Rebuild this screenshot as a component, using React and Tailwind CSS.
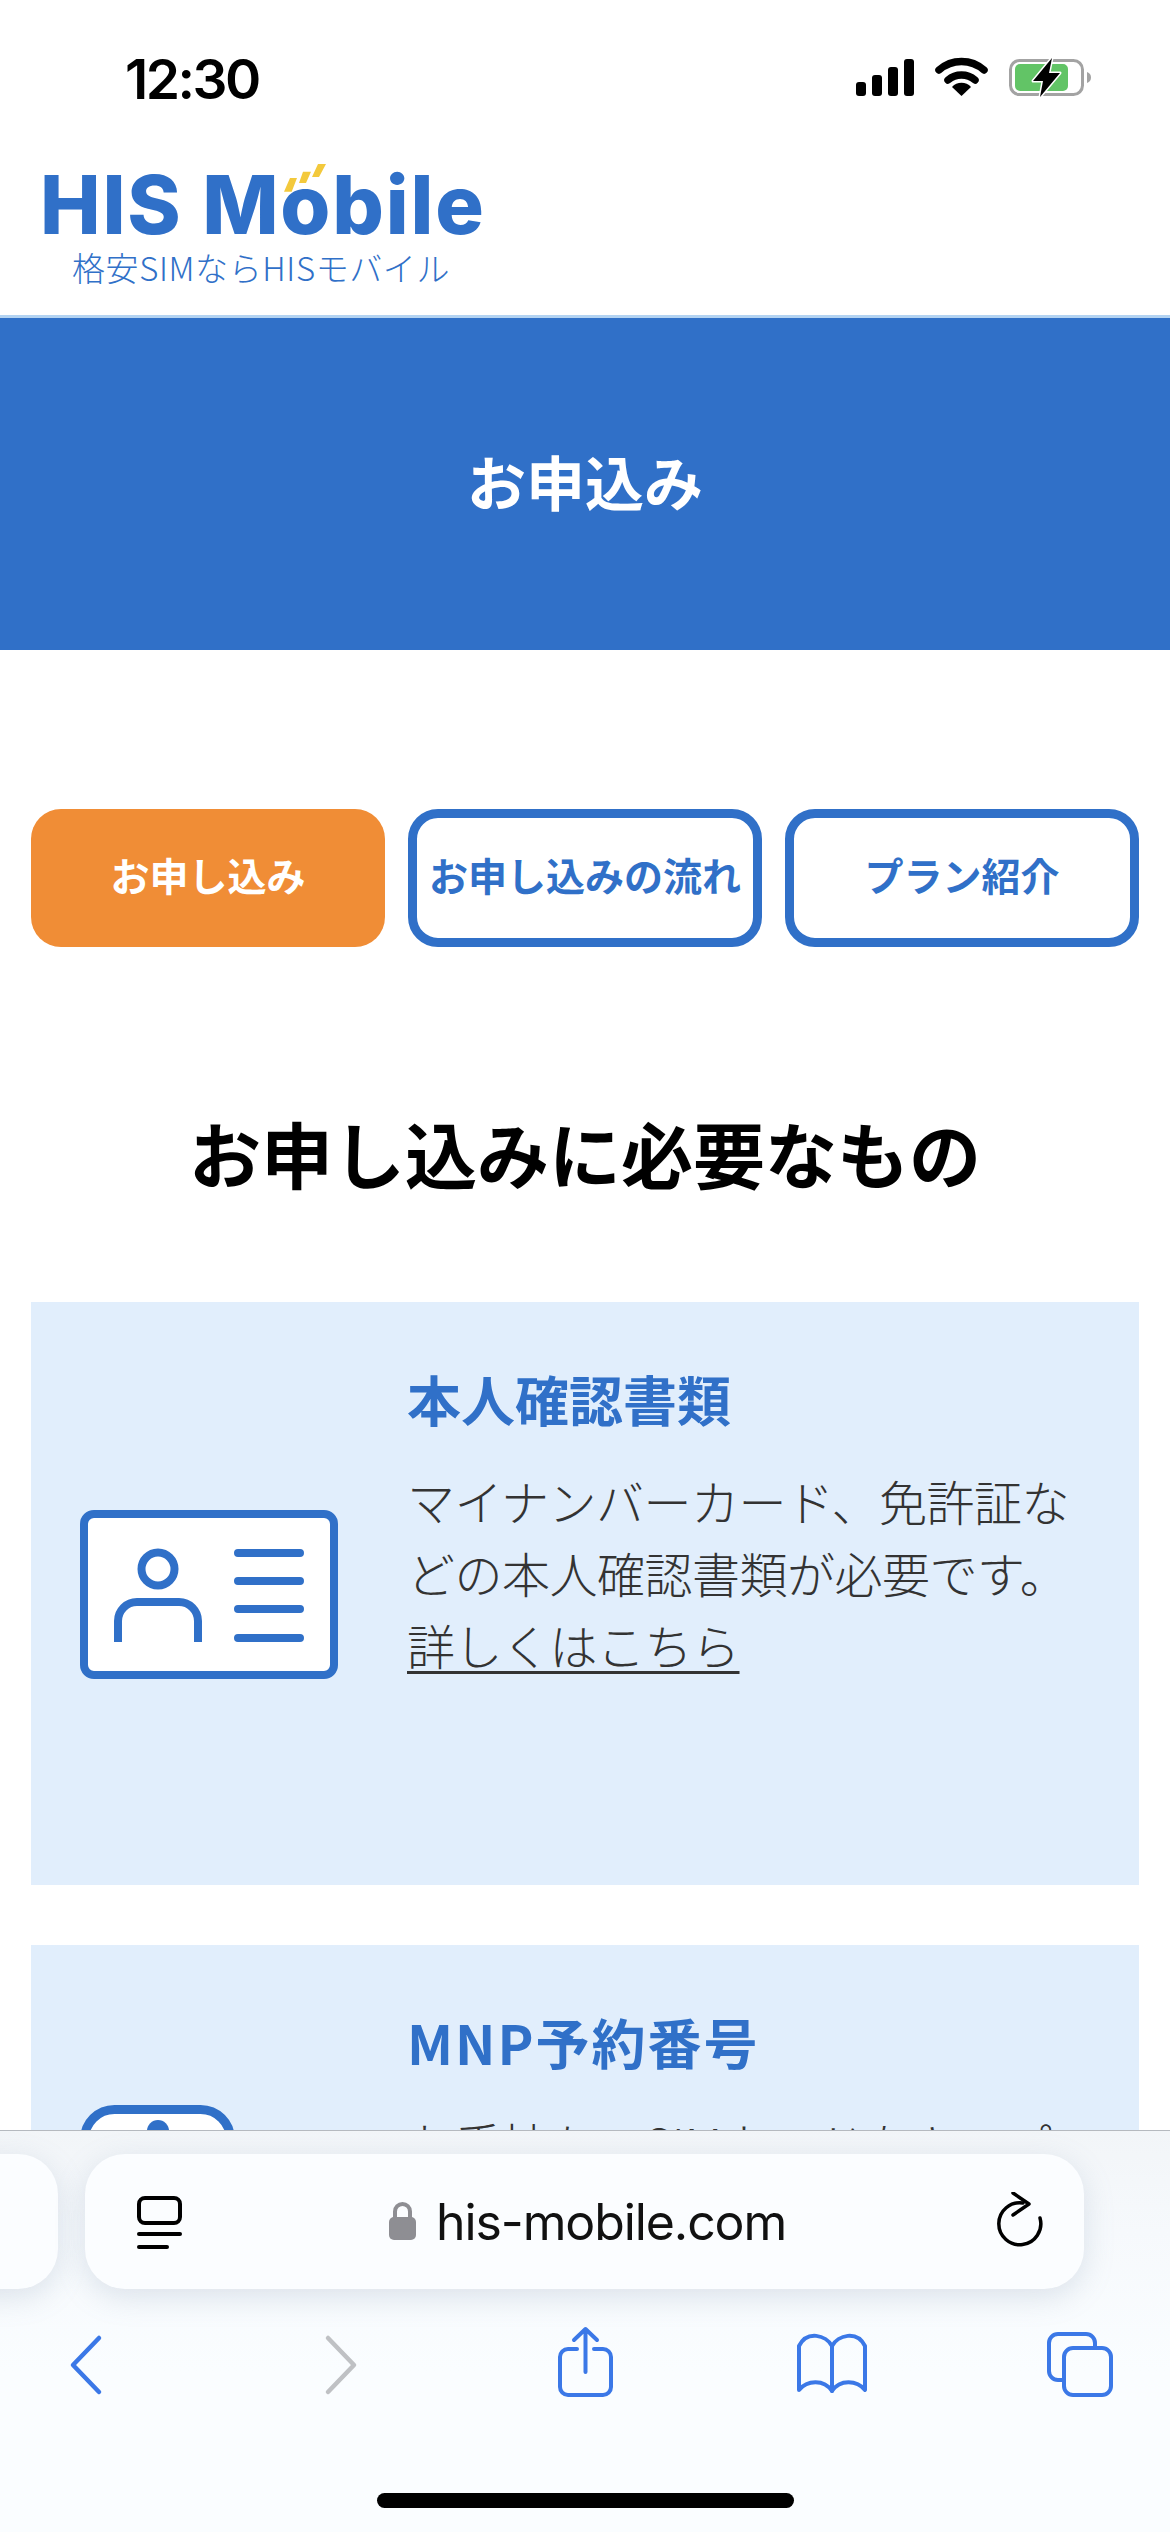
const BLUE = "#3070c8";
const TOOL = "#3b78e7";

function StatusIcons() {
  return (
    <svg width="235" height="38" viewBox="0 0 235 38" className="block overflow-visible">
      <rect x="0" y="23" width="10" height="14" rx="3" fill="#000" />
      <rect x="16" y="16" width="10" height="21" rx="3" fill="#000" />
      <rect x="32" y="8" width="10" height="29" rx="3" fill="#000" />
      <rect x="48" y="0" width="10" height="37" rx="3" fill="#000" />
      <path d="M83 11 A34 34 0 0 1 128 11" fill="none" stroke="#000" strokeWidth="7.500" strokeLinecap="round" />
      <path d="M92 21 A21 21 0 0 1 119 21" fill="none" stroke="#000" strokeWidth="7.500" strokeLinecap="round" />
      <path d="M105.500 37 L96 28 A13 13 0 0 1 115 28 Z" fill="#000" />
      <rect x="154.500" y="1.500" width="72" height="34" rx="9" fill="none" stroke="#a3a3a3" strokeWidth="3" />
      <rect x="159" y="5" width="53" height="27" rx="5" fill="#62c466" />
      <path d="M231 13 C234 14 235 16 235 18.500 C235 21 234 23 231 24 Z" fill="#a3a3a3" />
      <path d="M196 -1 L177 22 H187 L184 38 L204 14 H193 Z" fill="#000" stroke="#fff" strokeWidth="3" strokeLinejoin="round" paintOrder="stroke" />
    </svg>
  );
}

function Logo() {
  return (
    <div className="relative w-[440px] h-[120px]">
      <div className="absolute left-[-3px] top-[9px] text-[81px] leading-[72px] font-extrabold tracking-[1.8px] whitespace-nowrap text-[#3070c8] font-['Inter',sans-serif]">
        HIS Mobile
      </div>
      <svg className="absolute left-[241px] top-[4px]" width="43" height="29" viewBox="0 0 43 29">
        <path d="M0 27.700 L7.700 27.700 L13 14 L6 14 Z M15 19 L22 19 L27 7.700 L19 7.700 Z M28 13 L35 13 L42 0 L34 0 Z" fill="#f3c93c" />
      </svg>
      <div className="absolute left-[29px] top-[87px] text-[33px] leading-[40px] tracking-[0.6px] whitespace-nowrap text-[#3070c8] font-['Noto_Sans_CJK_JP',sans-serif] font-light">
        格安SIMならHISモバイル
      </div>
    </div>
  );
}

function IdIcon() {
  return (
    <svg width="258" height="170" viewBox="0 0 258 170" className="block">
      <rect x="4" y="4" width="250" height="161" rx="10" fill="#fff" stroke={BLUE} strokeWidth="8" />
      <circle cx="78" cy="59" r="16.500" fill="none" stroke={BLUE} strokeWidth="8" />
      <path d="M38 132 V111 A19 19 0 0 1 57 92 H99 A19 19 0 0 1 118 111 V132" fill="none" stroke={BLUE} strokeWidth="8" />
      <path d="M158 43 H220 M158 71 H220 M158 99 H220 M158 128 H220" fill="none" stroke={BLUE} strokeWidth="8" strokeLinecap="round" />
    </svg>
  );
}

function PhoneIcon() {
  return (
    <svg width="155" height="170" viewBox="0 0 155 170" className="block">
      <rect x="4.500" y="4.500" width="146" height="200" rx="30" fill="#fff" stroke={BLUE} strokeWidth="9" />
      <circle cx="78" cy="26" r="11" fill={BLUE} />
    </svg>
  );
}

function Tab({ active, children }) {
  return active ? (
    <div className="h-[138px] pb-[7px] rounded-[30px] bg-[#f08d36] text-white flex items-center justify-center text-[39px] font-bold">
      {children}
    </div>
  ) : (
    <div className="h-[138px] pb-[7px] rounded-[30px] border-[9px] border-[#3070c8] bg-white text-[#3070c8] flex items-center justify-center text-[39px] font-bold whitespace-nowrap">
      {children}
    </div>
  );
}

function Card({ icon, title, titleClass, children, className }) {
  return (
    <section className={"bg-[#e1eefc] flex pl-[49px] pr-[40px] " + className}>
      <div className="w-[327px] shrink-0">{icon}</div>
      <div className="flex-1">
        <h3 className={"text-[54px] leading-[70px] font-bold text-[#3070c8] " + titleClass}>{title}</h3>
        <div className="mt-[30px] text-[48px] leading-[72px] text-[#333333] font-light tracking-[-0.5px]">{children}</div>
      </div>
    </section>
  );
}

function SafariBar() {
  return (
    <div className="absolute left-0 right-0 bottom-0 h-[402px] border-t border-t-[#b5b9bf] bg-[linear-gradient(180deg,#f2f5f8_0%,#f6f9fc_25%,#fafdff_60%)] overflow-hidden">
      <div className="absolute left-[-60px] top-[23px] w-[118px] h-[135px] rounded-[40px] bg-[#fbfdff] shadow-[0_8px_30px_rgba(120,140,170,0.22)]" />
      <div className="absolute left-[85px] top-[23px] w-[999px] h-[135px] rounded-[40px] bg-[#fbfdff] shadow-[0_8px_30px_rgba(120,140,170,0.22)] flex items-center justify-center">
        <svg className="absolute left-[52px] top-[42px]" width="46" height="54" viewBox="0 0 46 54" fill="none" stroke="#000">
          <rect x="2" y="2" width="41" height="25" rx="6" strokeWidth="4" />
          <path d="M2 38 H43" strokeWidth="4" strokeLinecap="round" />
          <path d="M2 51 H30" strokeWidth="4" strokeLinecap="round" />
        </svg>
        <svg className="absolute left-[304px] top-[48px]" width="27" height="38" viewBox="0 0 27 38">
          <path d="M6 16 V9.500 A7.500 7.500 0 0 1 21 9.500 V16" fill="none" stroke="#8e8e93" strokeWidth="4" />
          <rect x="0" y="15" width="27" height="23" rx="5" fill="#8e8e93" />
        </svg>
        <span className="absolute left-[351px] top-[38px] text-[50px] leading-[60px] tracking-[-1.1px] text-[#111] whitespace-nowrap font-['Inter',sans-serif]">his-mobile.com</span>
        <svg className="absolute left-[912px] top-[38px]" width="46" height="56" viewBox="0 0 46 56" fill="none" stroke="#000" strokeWidth="3.500" strokeLinecap="round" strokeLinejoin="round">
          <path d="M26 11 A21 21 0 1 0 43 26" />
          <path d="M16 1 L32 12 L16 23" />
        </svg>
      </div>

      <svg className="absolute left-0 top-[189px]" width="1170" height="90" viewBox="0 190 1170 90" fill="none" strokeLinecap="round" strokeLinejoin="round">
        <path d="M99 208 L73 235 L99 262" stroke={TOOL} strokeWidth="4.500" />
        <path d="M328 208 L354 235 L328 262" stroke="#bfc1c4" strokeWidth="4.500" />
        <g stroke={TOOL} strokeWidth="4">
          <path d="M577 219 H568 A8 8 0 0 0 560 227 V257 A8 8 0 0 0 568 265 H603 A8 8 0 0 0 611 257 V227 A8 8 0 0 0 603 219 H594" />
          <path d="M585.500 242 V199 M574 210 L585.500 199 L597 210" />
          <path d="M832 216 V261" />
          <path d="M832 216 C826 205 807 200 799 216 V260 C807 250 824 249 832 261 C840 249 857 250 865 260 V216 C857 200 838 205 832 216 Z" />
          <path d="M1064 250 H1058 A9 9 0 0 1 1049 241 V213 A9 9 0 0 1 1058 204 H1086 A9 9 0 0 1 1095 213 V218" />
          <rect x="1064" y="218" width="47" height="47" rx="9" />
        </g>
      </svg>

      <div className="absolute left-[377px] top-[362px] w-[417px] h-[15px] rounded-full bg-black" />
    </div>
  );
}

export default function App() {
  return (
    <div className="relative w-[1170px] h-[2532px] overflow-hidden bg-white font-['Noto_Sans_CJK_JP',sans-serif]">
      <header className="h-[318px] border-b-[3px] border-b-[#b3d3f2] bg-white">
        <div className="h-[150px] pl-[125px] pr-[79px] pt-[49px] flex justify-between items-start">
          <span className="text-[55px] leading-[60px] font-semibold tracking-[-2.5px] text-black font-['Inter',sans-serif]">12:30</span>
          <div className="pt-[10px]"><StatusIcons /></div>
        </div>
        <div className="pl-[43px] pt-[10px]"><Logo /></div>
      </header>

      <div className="h-[332px] pb-[6px] bg-[#3070c8] flex items-center justify-center text-[59px] font-bold text-white">
        お申込み
      </div>

      <main className="px-[31px]">
        <nav className="mt-[159px] grid grid-cols-3 gap-[23px]">
          <Tab active>お申し込み</Tab>
          <Tab>お申し込みの流れ</Tab>
          <Tab>プラン紹介</Tab>
        </nav>

        <h2 className="mt-[155px] h-[100px] flex items-center justify-center text-[72px] font-bold text-black">
          お申し込みに必要なもの
        </h2>

        <Card
          className="mt-[100px] h-[583px] pt-[62px]"
          icon={<div className="mt-[146px]"><IdIcon /></div>}
          title="本人確認書類"
          titleClass=""
        >
          マイナンバーカード、免許証などの本人確認書類が必要です。
          <br />
          <a className="underline decoration-[3px] underline-offset-[6px]">詳しくはこちら</a>
        </Card>

        <Card
          className="mt-[60px] h-[600px] pt-[62px]"
          icon={<div className="mt-[98px]"><PhoneIcon /></div>}
          title="MNP予約番号"
          titleClass="tracking-[2px]"
        >
          お手持ちのSIMカードをキープ
        </Card>
      </main>

      <SafariBar />
    </div>
  );
}
